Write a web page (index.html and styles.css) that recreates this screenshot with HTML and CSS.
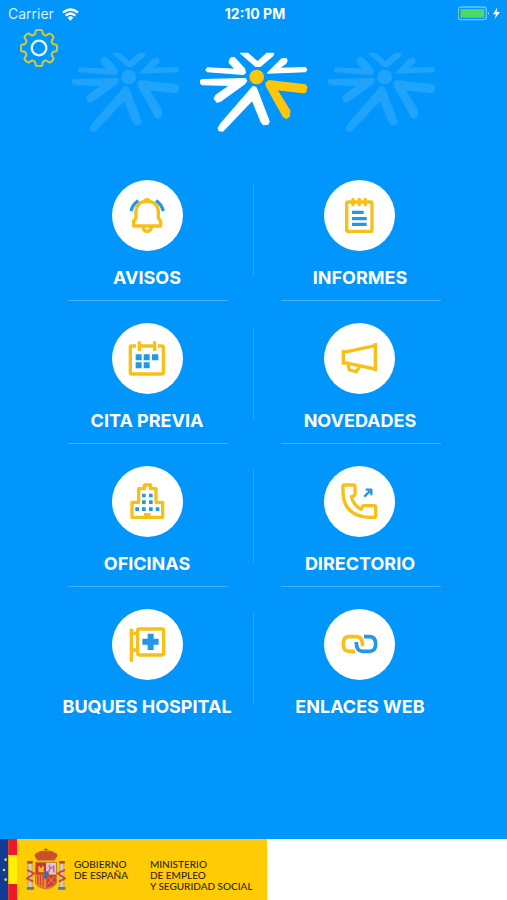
FILE: index.html
```html
<!DOCTYPE html>
<html lang="es">
<head>
<meta charset="utf-8">
<meta name="viewport" content="width=device-width, initial-scale=1">
<title>Seguridad Social</title>
<link rel="stylesheet" href="styles.css">
</head>
<body>
<svg class="defs" aria-hidden="true">
  <symbol id="rays" viewBox="1 0 384 300">
    <g stroke="currentColor" fill="currentColor" stroke-width="4" stroke-linejoin="round">
      <path d="M153 40H174L204 66 232 40H252L249 47 212 79H198Z"/>
      <path d="M120 60 126 53 134 53 164 86 167 98 161 103 54 95 49 90 53 84 138 88 119 68Z"/>
      <path d="M234 99 276 57 289 56 292 62 288 70 266 85 347 83 351 89 347 95Z"/>
      <path d="M33 121 39 119 167 116 171 122 165 131 91 184 82 186 74 176 78 167 122 136 38 134 33 130Z"/>
      <path d="M190 140 198 142 203 152 238 244 235 252 222 254 215 247 188 180 108 264 99 273 88 272 86 264 93 252Z"/>
    </g>
    <g class="accent" stroke-width="4" stroke-linejoin="round">
      <path d="M229 129 238 122 347 135 351 141 348 156 341 158 261 149 300 212 299 228 290 235 281 229 230 138Z"/>
      <circle cx="201" cy="111" r="20"/>
    </g>
  </symbol>
</svg>

<div class="status">
  <div class="carrier">
    <span>Carrier</span>
    <svg class="wifi" viewBox="0 0 51 39" aria-hidden="true">
      <g fill="none" stroke="#fff" stroke-width="7"><path d="M3 14Q25-5 48 14"/><path d="M11 23Q25 10 40 23"/></g>
      <path fill="#fff" d="M17 29Q25 21 34 29L25 38Z"/>
    </svg>
  </div>
  <time class="clock">12:10 PM</time>
  <div class="power">
    <svg class="battery" viewBox="0 0 132 48" aria-hidden="true">
      <rect x="1" y="3" width="84" height="38" rx="8" fill="none" stroke="#6cc0ff" stroke-width="4"/>
      <rect x="7" y="9" width="72" height="26" rx="3" fill="#4cd964"/>
      <path d="M90 16Q97 22 90 28Z" fill="#6cc0ff"/>
      <path d="M118 4 105 25H114L109 40 126 18H116Z" fill="#fff"/>
    </svg>
  </div>
</div>

<header class="hero">
  <button class="settings" aria-label="Ajustes">
    <svg viewBox="-57 -57 114 114" aria-hidden="true">
      <path fill="none" stroke="#d6c83a" stroke-width="6" stroke-linejoin="round" d="M-9-53Q0-56 9-53L12-42Q17-37 22-38L32-44Q41-41 44-32L38-22Q37-17 42-12L53-9Q56 0 53 9L42 12Q37 17 38 22L44 32Q41 41 32 44L22 38Q17 37 12 42L9 53Q0 56-9 53L-12 42Q-17 37-22 38L-32 44Q-41 41-44 32L-38 22Q-37 17-42 12L-53 9Q-56 0-53-9L-42-12Q-37-17-38-22L-44-32Q-41-41-32-44L-22-38Q-17-37-12-42Z"/>
      <circle r="22" fill="none" stroke="#e4f6ff" stroke-width="7"/>
    </svg>
  </button>
  <svg class="logo ghost" aria-hidden="true"><use href="#rays"/></svg>
  <svg class="logo" role="img" aria-label="Seguridad Social"><use href="#rays"/></svg>
  <svg class="logo ghost" aria-hidden="true"><use href="#rays"/></svg>
</header>

<nav class="menu">
  <a class="item" href="#avisos">
    <svg class="icon" viewBox="0 0 213 213" aria-hidden="true">
      <path class="y" d="M65 138V122Q72 119 72 110V94Q74 64 105 64T139 94V110Q139 119 146 122V138Z"/>
      <path class="yf" d="M93 64Q96 53 105 53T118 64Z"/>
      <path class="y" d="M93 141Q95 154 105 154T119 141"/>
      <path class="b" d="M57 93Q62 73 79 62M132 62Q149 73 154 93"/>
    </svg>
    <span>AVISOS</span>
  </a>
  <a class="item" href="#informes">
    <svg class="icon" viewBox="0 0 213 213" aria-hidden="true">
      <rect class="y" x="68" y="66" width="76" height="88" rx="5"/>
      <path class="y round" d="M87 58V74M106 58V74M124 58V74"/>
      <path class="b" d="M84 97H119M84 116H128M84 133H128"/>
    </svg>
    <span>INFORMES</span>
  </a>
  <a class="item" href="#cita-previa">
    <svg class="icon" viewBox="0 0 213 213" aria-hidden="true">
      <path class="y" d="M72 69H58Q55 69 55 72V149Q55 153 59 153H150Q154 153 154 149V72Q154 69 150 69H138M82 69H128M82 55V84M128 55V84"/>
      <path class="bf" d="M71 94H89V112H71ZM95 94H113V112H95ZM120 94H139V112H120ZM71 118H89V136H71ZM95 118H113V136H95Z"/>
    </svg>
    <span>CITA PREVIA</span>
  </a>
  <a class="item" href="#novedades">
    <svg class="icon" viewBox="0 0 213 213" aria-hidden="true">
      <path class="y" d="M154 60V145M58 81V125M58 88 154 68M58 118 154 138M72 123 76 141 97 146 107 130"/>
    </svg>
    <span>NOVEDADES</span>
  </a>
  <a class="item" href="#oficinas">
    <svg class="icon" viewBox="0 0 213 213" aria-hidden="true">
      <path class="y" d="M60 154V109H80V68H97V57H116V68H132V109H152V154Z"/>
      <path class="yf" d="M96 141H116V156H96Z"/>
      <path class="bf" d="M90 83H101V94H90ZM111 83H122V94H111ZM90 103H101V114H90ZM111 103H122V114H111ZM90 124H101V135H90ZM111 124H122V135H111ZM70 124H81V135H70ZM131 124H142V135H131Z"/>
    </svg>
    <span>OFICINAS</span>
  </a>
  <a class="item" href="#directorio">
    <svg class="icon" viewBox="0 0 213 213" aria-hidden="true">
      <path class="y" d="M57 62Q57 57 62 57H88Q93 57 93 62V84Q93 90 82 92Q88 118 112 130Q114 119 121 119H150Q155 119 155 124V149Q155 154 150 154H135Q57 150 57 75Z"/>
      <path class="b thin" d="M121 92 142 71M125 71H142V88"/>
    </svg>
    <span>DIRECTORIO</span>
  </a>
  <a class="item" href="#buques-hospital">
    <svg class="icon" viewBox="0 0 213 213" aria-hidden="true">
      <path class="y" d="M58 59V158M58 66 64 73H77M58 130 64 123H77"/>
      <rect class="y" x="77" y="60" width="78" height="78" rx="5"/>
      <path class="bf" d="M107 74H125V89H140V107H125V123H107V107H91V89H107Z"/>
    </svg>
    <span>BUQUES HOSPITAL</span>
  </a>
  <a class="item" href="#enlaces-web">
    <svg class="icon" viewBox="0 0 213 213" aria-hidden="true">
      <path class="y thick" d="M93 127H76Q58 127 58 105T76 83H98Q116 83 116 112"/>
      <path class="b thick" d="M120 83H136Q155 83 155 105T136 127H115Q97 127 97 99"/>
    </svg>
    <span>ENLACES WEB</span>
  </a>
</nav>

<footer class="footer">
  <div class="gov">
    <svg class="flags" viewBox="0 0 51 183" preserveAspectRatio="none" aria-hidden="true">
      <path fill="#123c91" d="M0 0H25V183H0Z"/><path fill="#f01728" d="M25 0H51V183H25Z"/><path fill="#fff200" d="M25 48H51V135H25Z"/>
      <g fill="#d9d36a"><circle cx="17" cy="62" r="4"/><circle cx="12" cy="93" r="4"/><circle cx="17" cy="122" r="4"/></g>
    </svg>
    <svg class="arms" viewBox="0 0 120 130" aria-hidden="true">
      <g fill="#d8cfc0" stroke="#a08a70" stroke-width="2"><path d="M6 47H18V120H6ZM102 47H114V120H102Z"/></g>
      <path fill="#b04a2c" d="M3 39H20V47H3ZM100 39H117V47H100Z"/>
      <path fill="#5579a5" d="M2 118H24V126H2ZM97 118H119V126H97Z"/>
      <path fill="none" stroke="#d44732" stroke-width="6" d="M3 66 24 77 3 92 21 102M117 66 96 77 117 92 99 102"/>
      <path fill="#d64c30" stroke="#93602c" stroke-width="2" d="M34 35Q18 18 36 14Q48 5 60 12Q73 5 85 14Q102 18 86 35Z"/>
      <path stroke="#93602c" stroke-width="3" fill="none" d="M60 0V34M53 5H67M43 14 47 31M77 14 73 31M33 36H87"/>
      <path fill="#ed8a30" stroke="#a65d35" stroke-width="2" d="M28 43H92V103Q90 119 60 124Q30 119 28 103Z"/>
      <path fill="#d82c32" d="M30 45H60V80H30Z"/><path fill="#e2c6d3" d="M60 45H90V80H60Z"/>
      <path fill="#f1cd24" d="M37 73V55H42V60H48V55H53V73Z"/>
      <path fill="none" stroke="#b871a8" stroke-width="5" d="M68 73 72 60 69 51M72 63 83 56 84 74"/>
      <path stroke="#ce4633" stroke-width="4" d="M35 81V110M43 81V114M51 81V117"/>
      <path fill="#cf3d35" d="M61 81H90V103Q88 115 61 121Z"/>
      <path fill="none" stroke="#ec9232" stroke-width="3" d="M65 85 86 108M86 85 65 110"/>
      <ellipse cx="60" cy="82" rx="9" ry="12" fill="#3f719f" stroke="#d15742" stroke-width="3"/>
    </svg>
    <p class="dept">GOBIERNO<br>DE ESPAÑA</p>
    <p class="dept ministry">MINISTERIO<br>DE EMPLEO<br>Y SEGURIDAD SOCIAL</p>
  </div>
</footer>
</body>
</html>
```
FILE: styles.css
```css
* { box-sizing: border-box; }

body {
  margin: 0;
  min-height: 100vh;
  display: flex;
  flex-direction: column;
  background: #0096fb;
  color: #fff;
  font-family: Inter, "Liberation Sans", sans-serif;
}

.defs { position: absolute; width: 0; height: 0; }

.status {
  display: grid;
  grid-template-columns: 1fr auto 1fr;
  align-items: center;
  height: 28px;
  padding: 0 5px 0 8px;
  font-size: 14px;
  line-height: 20px;
}
.carrier { display: flex; align-items: center; gap: 8px; color: #d8f0ff; }
.wifi { width: 17px; height: 13px; }
.clock { font-weight: 700; }
.power { display: flex; justify-content: flex-end; }
.battery { width: 44px; height: 16px; }

.hero {
  position: relative;
  display: flex;
  justify-content: center;
  padding-top: 12px;
}
.settings {
  position: absolute;
  top: 1px;
  left: 20px;
  width: 38px;
  height: 38px;
  padding: 0;
  border: 0;
  background: none;
}
.settings svg { display: block; width: 100%; height: 100%; }
.logo { width: 128px; height: 100px; color: #fff; }
.accent { fill: var(--accent, #fdc60a); stroke: var(--accent, #fdc60a); }
.ghost { --accent: #fff; opacity: 0.12; }

.menu {
  display: grid;
  grid-template-columns: 1fr 1fr;
  width: 84%;
  margin: 40px auto 24px;
}
.item {
  position: relative;
  display: flex;
  flex-direction: column;
  align-items: center;
  gap: 15px;
  height: 143px;
  color: #fff;
  font-size: 18px;
  font-weight: 700;
  line-height: 24px;
  text-decoration: none;
  white-space: nowrap;
}
.item::after {
  content: "";
  position: absolute;
  left: 13%;
  right: 12%;
  bottom: 22px;
  height: 1px;
  background: #43b2fd;
}
.item:nth-last-child(-n+2)::after { display: none; }
.item:nth-child(odd)::before {
  content: "";
  position: absolute;
  right: 0;
  top: 4px;
  width: 1px;
  height: 92px;
  background: #2ba7fc;
}
.icon { width: 71px; height: 71px; border-radius: 50%; background: #fff; }

.y, .b { fill: none; stroke-width: 10; stroke-linejoin: round; }
.y { stroke: #f8bf18; }
.b { stroke: #2597e3; }
.yf { fill: #f8bf18; }
.bf { fill: #2597e3; }
.round { stroke-linecap: round; }
.b.thin { stroke-width: 7; }
.thick { stroke-width: 11; }

.footer { margin-top: auto; background: #fff; }
.gov {
  display: flex;
  width: max-content;
  height: 61px;
  padding-right: 14px;
  background: #ffcb05;
  color: #2b2412;
}
.flags { width: 17px; height: 61px; }
.arms { width: 40px; height: 43px; margin: 9px 8px 0 9px; }
.dept {
  margin: 20px 0 0;
  font-family: Lato, "Liberation Sans", sans-serif;
  font-size: 10px;
  font-weight: 500;
  line-height: 11px;
}
.ministry { margin-left: 22px; }
```
